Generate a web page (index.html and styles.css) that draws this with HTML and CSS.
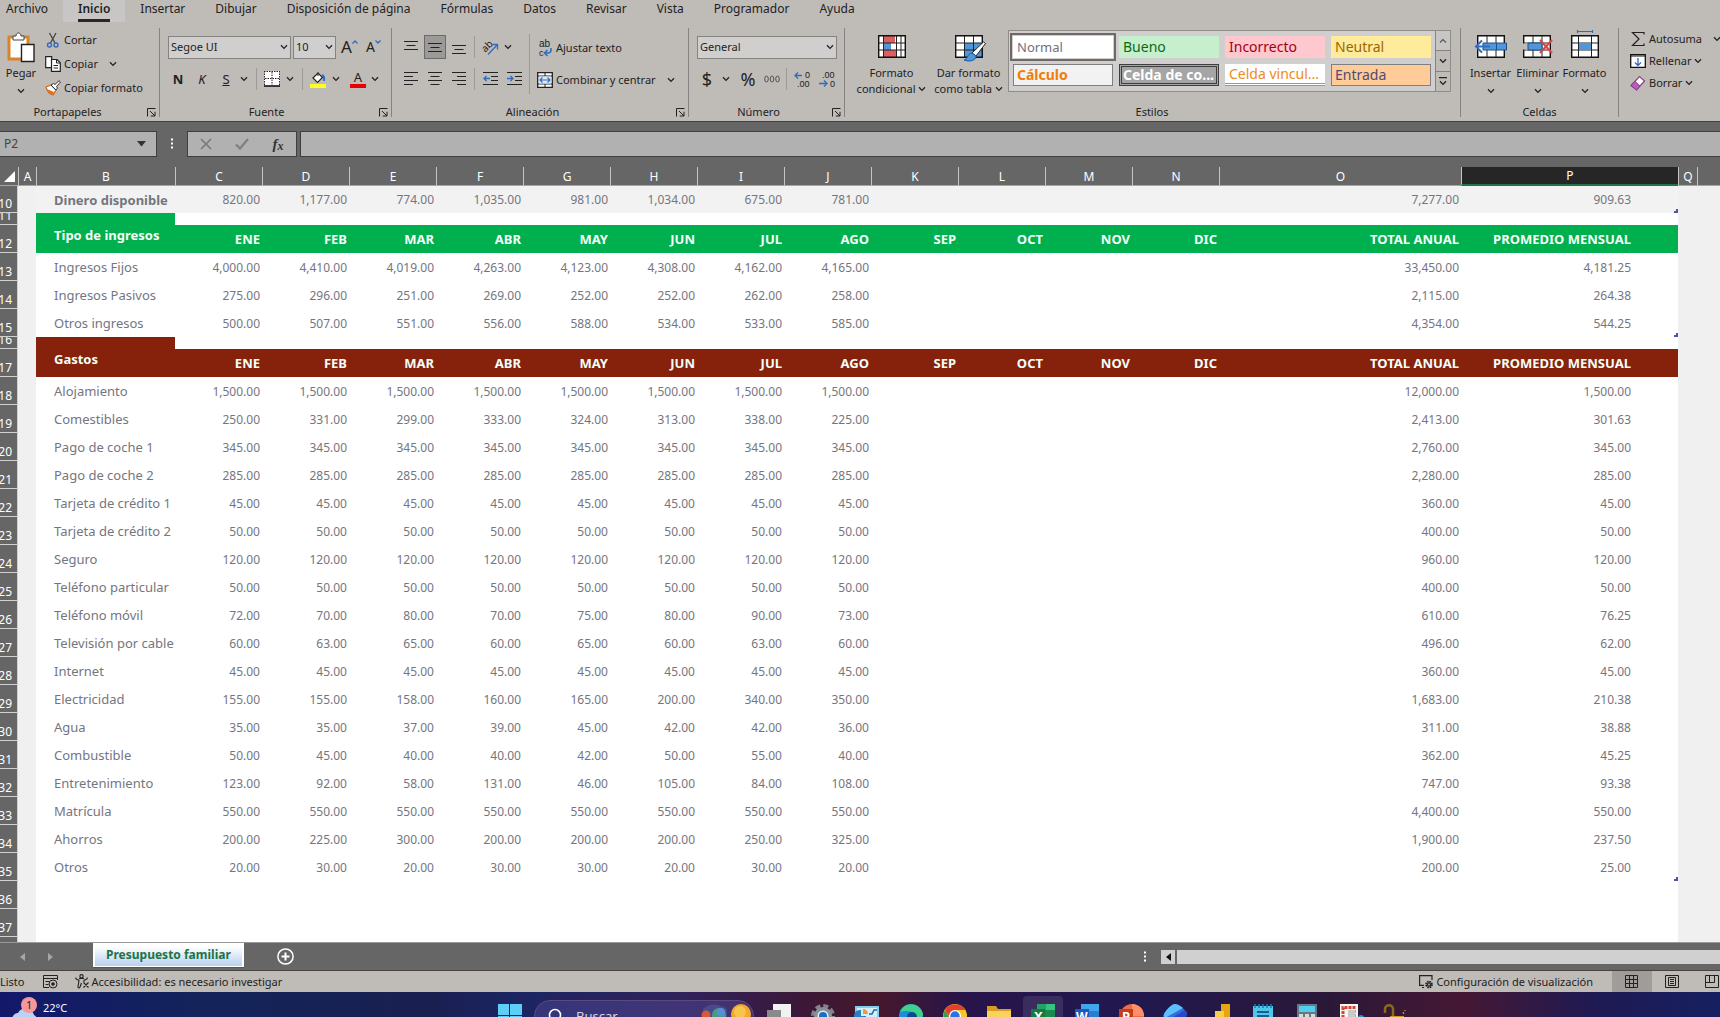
FILE: index.html
```html
<!DOCTYPE html>
<html lang="es">
<head>
<meta charset="utf-8">
<title>Presupuesto familiar</title>
<link rel="stylesheet" href="styles.css">
</head>
<body>
<svg class="symbols" aria-hidden="true">
  <symbol id="chevron" viewBox="0 0 8 6"><path d="M1 1.2 4 4.4 7 1.2" fill="none" stroke="#222" stroke-width="1.3"/></symbol>
  <symbol id="launcher" viewBox="0 0 9 9"><path d="M.5 8.5V.5H8.5M3 3l5 5M8 3.8V8H3.8" fill="none" stroke="#222"/></symbol>
</svg>

<nav class="tabs">
  <button>Archivo</button>
  <button class="active"><span>Inicio</span></button>
  <button>Insertar</button>
  <button>Dibujar</button>
  <button>Disposición de página</button>
  <button>Fórmulas</button>
  <button>Datos</button>
  <button>Revisar</button>
  <button>Vista</button>
  <button>Programador</button>
  <button>Ayuda</button>
</nav>

<div class="ribbon">
  <section class="group clipboard">
    <div class="body">
      <button class="big">
        <svg width="28" height="30" viewBox="0 0 28 30"><path d="M2 5h19v22H2z" fill="#fff" stroke="#d8842c" stroke-width="3"/><path d="M6 8V4h3c0-4 5-4 5 0h3v4z" fill="#fff" stroke="#444"/><path d="M14.500 12.500h12.500v17H14.500z" fill="#fff" stroke="#222" stroke-width="1.400"/></svg>
        <span>Pegar</span>
        <svg class="chev"><use href="#chevron"/></svg>
      </button>
      <div class="stack">
        <button class="tool"><svg width="16" height="16" viewBox="0 0 16 16"><path d="M4.500 1 10 11M11 1 5.500 11" stroke="#444" stroke-width="1.300"/><g fill="none" stroke="#2f6cc0" stroke-width="1.400"><circle cx="4.500" cy="13" r="2"/><circle cx="11" cy="13" r="2"/></g></svg>Cortar</button>
        <button class="tool"><svg width="16" height="16" viewBox="0 0 16 16"><path d="M.7.700h6v11h-6z" fill="#fff" stroke="#222" stroke-width="1.200"/><path d="M6.500 3.500H12l3.300 3.300v8.500H6.500z" fill="#fff" stroke="#222" stroke-width="1.200"/><path d="M11.500 3.500V7h3.500M8.500 9.500h4.500M8.500 12h4.500" fill="none" stroke="#222"/></svg>Copiar<svg class="chev wide"><use href="#chevron"/></svg></button>
        <button class="tool"><svg width="16" height="16" viewBox="0 0 16 16"><path d="M1 7l5-2 5 5-3 5C5 14 2 11 1 7z" fill="#fff" stroke="#c96a1c" stroke-width="1.200"/><path d="M2 9l7 3-1 3C5 14 3 12 2 9z" fill="#d8752a"/><path d="M6 5l5 5 1.500-2-1-1.500L15.500 2 14 .7 10 4.500 8.500 3.500z" fill="#fff" stroke="#333"/></svg>Copiar formato</button>
      </div>
    </div>
    <div class="caption">Portapapeles<button class="launch" aria-label="Portapapeles"><svg width="9" height="9"><use href="#launcher"/></svg></button></div>
  </section>

  <section class="group font">
    <div class="body rows">
      <div class="line">
        <select class="combo family" aria-label="Fuente"><option>Segoe UI</option></select>
        <select class="combo size" aria-label="Tamaño"><option>10</option></select>
        <button class="grow" aria-label="Aumentar">A<svg width="6" height="4" viewBox="0 0 6 4"><path d="M.5 3.500 3 1l2.500 2.500" fill="none" stroke="#2f6cc0" stroke-width="1.300"/></svg></button>
        <button class="grow shrink" aria-label="Disminuir">A<svg width="6" height="4" viewBox="0 0 6 4"><path d="M.5.500 3 3 5.500.500" fill="none" stroke="#2f6cc0" stroke-width="1.300"/></svg></button>
      </div>
      <div class="line">
        <button class="cell bold">N</button>
        <button class="cell italic">K</button>
        <button class="cell under">S</button>
        <button class="drop" aria-label="Subrayado"><svg class="chev"><use href="#chevron"/></svg></button>
        <i class="sep"></i>
        <button class="cell" aria-label="Bordes"><svg width="16" height="16" viewBox="0 0 16 16"><path d="M0 0h16v15H0z" fill="#fff"/><path d="M.5 0v14M15.500 0v14M0 .5h16M8 1v13M1 7.500h14" stroke="#222" stroke-dasharray="1.500 1"/><path d="M0 15h16" stroke="#111" stroke-width="1.600"/></svg></button>
        <button class="drop" aria-label="Tipo de borde"><svg class="chev"><use href="#chevron"/></svg></button>
        <i class="sep"></i>
        <button class="cell" aria-label="Color de relleno"><svg width="16" height="17" viewBox="0 0 16 17"><path d="M3 7l5-5 4.500 4.500-5 5z" fill="#fff" stroke="#222" stroke-width="1.200"/><path d="M8 5V1.500" stroke="#222"/><path d="M12 4c2 1 2.500 3 2 6" fill="none" stroke="#2f6cc0" stroke-width="2"/><path d="M0 13h16v4H0z" fill="#ff2"/></svg></button>
        <button class="drop" aria-label="Elegir relleno"><svg class="chev"><use href="#chevron"/></svg></button>
        <button class="cell letter" aria-label="Color de fuente">A</button>
        <button class="drop" aria-label="Elegir color"><svg class="chev"><use href="#chevron"/></svg></button>
      </div>
    </div>
    <div class="caption">Fuente<button class="launch" aria-label="Fuente"><svg width="9" height="9"><use href="#launcher"/></svg></button></div>
  </section>

  <section class="group align">
    <div class="body">
      <div class="rows">
        <div class="line">
          <button class="cell" aria-label="Superior"><svg width="14" height="14" viewBox="0 0 14 14"><path d="M0 1.500h14M2.500 5.500h9M0 9.500h14" stroke="#222"/></svg></button>
          <button class="cell pressed" aria-label="Medio"><svg width="14" height="14" viewBox="0 0 14 14"><path d="M0 3.500h14M2.500 7.500h9M0 11.500h14" stroke="#222"/></svg></button>
          <button class="cell" aria-label="Inferior"><svg width="14" height="14" viewBox="0 0 14 14"><path d="M0 5.500h14M2.500 9.500h9M0 13.500h14" stroke="#222"/></svg></button>
          <i class="sep"></i>
          <button class="cell" aria-label="Orientación"><svg width="17" height="17" viewBox="0 0 17 17"><text x="0" y="10" font-size="10" fill="#222" transform="rotate(-45 6 8)">ab</text><path d="M6 15.500 15 6M10.500 5.500H15.500V10.500" fill="none" stroke="#2f6cc0" stroke-width="1.300"/></svg></button>
          <button class="drop" aria-label="Ángulo"><svg class="chev"><use href="#chevron"/></svg></button>
        </div>
        <div class="line">
          <button class="cell" aria-label="Izquierda"><svg width="14" height="14" viewBox="0 0 14 14"><path d="M0 .5h14M0 4.500h9M0 8.500h14M0 12.500h9" stroke="#222"/></svg></button>
          <button class="cell" aria-label="Centrar"><svg width="14" height="14" viewBox="0 0 14 14"><path d="M0 .5h14M2.500 4.500h9M0 8.500h14M2.500 12.500h9" stroke="#222"/></svg></button>
          <button class="cell" aria-label="Derecha"><svg width="14" height="14" viewBox="0 0 14 14"><path d="M0 .5h14M5 4.500h9M0 8.500h14M5 12.500h9" stroke="#222"/></svg></button>
          <i class="sep"></i>
          <button class="cell" aria-label="Disminuir sangría"><svg width="15" height="14" viewBox="0 0 15 14"><path d="M0 .5h15M8 4.500h7M8 8.500h7M0 12.500h15" stroke="#222"/><path d="M1 6.500h6M3.500 4 1 6.500 3.500 9" fill="none" stroke="#2f6cc0" stroke-width="1.300"/></svg></button>
          <button class="cell" aria-label="Aumentar sangría"><svg width="15" height="14" viewBox="0 0 15 14"><path d="M0 .5h15M8 4.500h7M8 8.500h7M0 12.500h15" stroke="#222"/><path d="M0 6.500h6M3.500 4 6 6.500 3.500 9" fill="none" stroke="#2f6cc0" stroke-width="1.300"/></svg></button>
        </div>
      </div>
      <i class="sep tall"></i>
      <div class="rows wrapcol">
        <button class="tool"><svg class="glyphs" width="16" height="17" viewBox="0 0 16 17"><text x="2" y="7" font-size="10">ab</text><text x="2" y="16" font-size="9">c</text><path d="M14 8v2c0 2-1 3-3 3H8M10.500 10 7.500 13l3 3" fill="none" stroke="#2f6cc0" stroke-width="1.500"/></svg>Ajustar texto</button>
        <button class="tool"><svg width="16" height="16" viewBox="0 0 16 16"><path d="M.7.700h14.600v14.600H.7z" fill="#fff" stroke="#222" stroke-width="1.300"/><path d="M1 4h14M1 12h14M8 1v3M8 12v3" stroke="#222"/><path d="M2 4.500h12v7H2z" fill="#dbe9f8"/><path d="M3 8h10M5.500 5.500 3 8l2.500 2.500M10.500 5.500 13 8l-2.500 2.500" fill="none" stroke="#2f6cc0" stroke-width="1.200"/></svg>Combinar y centrar<svg class="chev wide"><use href="#chevron"/></svg></button>
      </div>
    </div>
    <div class="caption">Alineación<button class="launch" aria-label="Alineación"><svg width="9" height="9"><use href="#launcher"/></svg></button></div>
  </section>

  <section class="group number">
    <div class="body rows">
      <div class="line"><select class="combo format" aria-label="Formato de número"><option>General</option></select></div>
      <div class="line">
        <button class="cell sign">$</button>
        <button class="drop" aria-label="Moneda"><svg class="chev"><use href="#chevron"/></svg></button>
        <button class="cell sign">%</button>
        <button class="cell thousand" aria-label="Millares"><svg width="16" height="8" viewBox="0 0 16 8"><g fill="none" stroke="#555"><ellipse cx="2.500" cy="4" rx="1.800" ry="3"/><ellipse cx="8" cy="4" rx="1.800" ry="3"/><ellipse cx="13.500" cy="4" rx="1.800" ry="3"/></g></svg></button>
        <i class="sep"></i>
        <button class="cell" aria-label="Aumentar decimales"><svg class="glyphs" width="17" height="17" viewBox="0 0 17 17"><text x="11" y="7" font-size="9">0</text><text x="3" y="16" font-size="9">.00</text><path d="M1 4.500h7M4 1.500l-3 3 3 3" fill="none" stroke="#2f6cc0" stroke-width="1.300"/></svg></button>
        <button class="cell" aria-label="Disminuir decimales"><svg class="glyphs" width="17" height="17" viewBox="0 0 17 17"><text x="3" y="7" font-size="9">.00</text><text x="11" y="16" font-size="9">0</text><path d="M0 12.500h7.500M5 9.500l3 3-3 3" fill="none" stroke="#2f6cc0" stroke-width="1.300"/></svg></button>
      </div>
    </div>
    <div class="caption">Número<button class="launch" aria-label="Número"><svg width="9" height="9"><use href="#launcher"/></svg></button></div>
  </section>

  <section class="group styles">
    <div class="body">
      <button class="big two">
        <svg width="28" height="23" viewBox="0 0 28 23"><path d="M.7.700h26.600v21.600H.7z" fill="#fff"/><path d="M5 1h12v7H5zM5 15h14v7H5z" fill="#dc5f63"/><path d="M5 8h8v7H5z" fill="#4f97d8"/><path d="M5.500 1v21M18.500 1v21M23 1v21M1 8h26M1 15h26" stroke="#222" stroke-width="1"/><path d="M.7.700h26.600v21.600H.7z" fill="none" stroke="#111" stroke-width="1.400"/></svg>
        <span>Formato<br>condicional <svg class="chev"><use href="#chevron"/></svg></span>
      </button>
      <button class="big two">
        <svg width="32" height="27" viewBox="0 0 32 27" class="drop-low"><path d="M.7.700h26.600v21.600H.7z" fill="#fff"/><path d="M9 8h18v14H9z" fill="#4f97d8"/><path d="M9.500 1v21M18.500 1v21M1 8h26M1 15h26" stroke="#222"/><path d="M.7.700h26.600v21.600H.7z" fill="none" stroke="#111" stroke-width="1.400"/><path d="M17 18 28.500 7l2 1.500L21 21z" fill="#fff" stroke="#222"/><path d="M17 18l4 3c0 5-7 6-12 4 4-1 3-6 8-7z" fill="#4f97d8" stroke="#1e5aa0"/></svg>
        <span>Dar formato<br>como tabla <svg class="chev"><use href="#chevron"/></svg></span>
      </button>
      <div class="gallery">
        <div class="swatches">
          <button class="sw normal">Normal</button>
          <button class="sw good">Bueno</button>
          <button class="sw bad">Incorrecto</button>
          <button class="sw neutral">Neutral</button>
          <button class="sw calc">Cálculo</button>
          <button class="sw check">Celda de co...</button>
          <button class="sw linked">Celda vincul...</button>
          <button class="sw input">Entrada</button>
        </div>
        <div class="scroller">
          <button aria-label="Subir"><svg width="8" height="6" viewBox="0 0 8 6"><path d="M1 4.500 4 1.500l3 3" fill="none" stroke="#555" stroke-width="1.200"/></svg></button>
          <button aria-label="Bajar"><svg class="chev"><use href="#chevron"/></svg></button>
          <button aria-label="Más"><svg width="8" height="9" viewBox="0 0 8 9"><path d="M0 .7h8M1 4.200 4 7.400l3-3.200" fill="none" stroke="#222" stroke-width="1.300"/></svg></button>
        </div>
      </div>
    </div>
    <div class="caption">Estilos</div>
  </section>

  <section class="group cells">
    <div class="body">
      <button class="big three">
        <svg width="32" height="23" viewBox="0 0 32 23"><path d="M2.700.700h26.600v21.600H2.700z" fill="#fff" stroke="#111" stroke-width="1.400"/><path d="M12 1v21M21 1v21" stroke="#222"/><path d="M8 8h23.500v7H8z" fill="#4f97d8" stroke="#1e4f8a"/><path d="M1 11.500h14M7 5.500l-6 6 6 6" fill="none" stroke="#2f6cc0" stroke-width="2"/><path d="M21.500 8v7" stroke="#1e4f8a"/></svg>
        <span>Insertar</span><svg class="chev"><use href="#chevron"/></svg>
      </button>
      <button class="big three">
        <svg width="30" height="23" viewBox="0 0 30 23"><path d="M.7.700h26.600v21.600H.7z" fill="#fff" stroke="#111" stroke-width="1.400"/><path d="M10 1v21M19 1v21M1 8h26M1 15h26" stroke="#222"/><path d="M0 8.500h5v6H0z" fill="#bfbbb7"/><path d="M5 8h14v7H5z" fill="#4f97d8" stroke="#1e4f8a"/><path d="M17 5l12 13M29 5 17 18" stroke="#d5474b" stroke-width="2.200"/></svg>
        <span>Eliminar</span><svg class="chev"><use href="#chevron"/></svg>
      </button>
      <button class="big three">
        <svg width="28" height="29" viewBox="0 0 28 29" class="raise"><path d="M6.500 1v3M21.500 1v3M6.500 2.500h15" stroke="#2f6cc0" stroke-width="1.200"/><path d="M.7 6.700h26.600v21.600H.7z" fill="#fff" stroke="#111" stroke-width="1.400"/><path d="M7.500 7v21M20.500 7v21M1 14h26M1 21h26" stroke="#222"/><path d="M8 14h12v7H8z" fill="#4f97d8"/></svg>
        <span>Formato</span><svg class="chev"><use href="#chevron"/></svg>
      </button>
    </div>
    <div class="caption">Celdas</div>
  </section>

  <section class="group editing">
    <div class="stack">
      <button class="tool"><svg width="16" height="16" viewBox="0 0 16 16"><path d="M14 3.500V1.500H2.500L9 8l-6.500 6.500H14v-2" fill="none" stroke="#222" stroke-width="1.200"/></svg>Autosuma<svg class="chev wide"><use href="#chevron"/></svg></button>
      <button class="tool"><svg width="16" height="16" viewBox="0 0 16 16"><path d="M.7 1.700h14.600v12.600H.7z" fill="#fff" stroke="#111" stroke-width="1.300"/><path d="M1 3h14" stroke="#111"/><path d="M8 5v7M5 9.500l3 3 3-3" fill="none" stroke="#2f6cc0" stroke-width="1.300"/></svg>Rellenar<svg class="chev"><use href="#chevron"/></svg></button>
      <button class="tool"><svg width="16" height="16" viewBox="0 0 16 16"><path d="M1 10.500 9.500 1.500l5 4.500-8 9z" fill="#fff" stroke="#92398f" stroke-width="1.200"/><path d="M1 10.500 5 6.300l5 4.700-3.500 4z" fill="#b85fb5" stroke="#92398f"/></svg>Borrar<svg class="chev"><use href="#chevron"/></svg></button>
    </div>
  </section>
</div>

<div class="formula-bar">
  <div class="namebox"><input aria-label="Cuadro de nombres" value="P2"><svg width="9" height="6" viewBox="0 0 9 6"><path d="M0 0h9L4.500 5.500z" fill="#333"/></svg></div>
  <svg class="dots" width="3" height="12" viewBox="0 0 3 12"><path d="M0 1.500h2M0 5.500h2M0 9.500h2" stroke="#fff" stroke-width="2"/></svg>
  <div class="fx">
    <button aria-label="Cancelar"><svg width="12" height="12" viewBox="0 0 12 12"><path d="M1 1l10 10M11 1 1 11" stroke="#777" stroke-width="1.500"/></svg></button>
    <button aria-label="Introducir"><svg width="14" height="12" viewBox="0 0 14 12"><path d="M1 6.500 5 10.500 13 1" fill="none" stroke="#808080" stroke-width="2.200"/></svg></button>
    <button class="fn">f<small>x</small></button>
  </div>
  <input class="formula" aria-label="Barra de fórmulas">
</div>

<main class="grid">
  <table id="sheet"></table>
</main>

<div class="sheetbar">
  <div class="sheets">
    <button class="nav" aria-label="Anterior"><svg width="5" height="8" viewBox="0 0 5 8"><path d="M5 0v8L0 4z" fill="#a6a6a6"/></svg></button>
    <button class="nav" aria-label="Siguiente"><svg width="5" height="8" viewBox="0 0 5 8"><path d="M0 0v8l5-4z" fill="#a6a6a6"/></svg></button>
    <button class="sheet">Presupuesto familiar</button>
    <button class="add" aria-label="Hoja nueva"><svg width="17" height="17" viewBox="0 0 17 17"><circle cx="8.500" cy="8.500" r="7.600" fill="none" stroke="#fff" stroke-width="1.500"/><path d="M8.500 4.500v8M4.500 8.500h8" stroke="#fff" stroke-width="2"/></svg></button>
  </div>
  <div class="hscroll">
    <svg class="dots" width="3" height="12" viewBox="0 0 3 12"><path d="M0 1.500h2M0 5.500h2M0 9.500h2" stroke="#fff" stroke-width="2"/></svg>
    <button aria-label="Desplazar a la izquierda"><svg width="5" height="8" viewBox="0 0 5 8"><path d="M5 0v8L0 4z" fill="#111"/></svg></button>
    <div class="track"></div>
  </div>
</div>

<footer class="status">
  <span class="ready">Listo</span>
  <svg width="15" height="14" viewBox="0 0 15 14"><g fill="none" stroke="#222"><path d="M6 12.500H.5V.5h14V5M.5 3.500h14M2.500 6.500h4M2.500 9.500h3"/><circle cx="10" cy="9" r="4"/></g><circle cx="10" cy="9" r="1.800" fill="#222"/></svg>
  <button class="access"><svg width="15" height="15" viewBox="0 0 15 15"><g fill="none" stroke="#222" stroke-width="1.100"><circle cx="6.500" cy="2.300" r="1.700"/><path d="M1 3.500c-.8 1.200 0 1.700 3 2.700L3 13c0 1.200 1.500 1.200 2 0l1.500-4M12 3.500c.8 1.200 0 1.700-3 2.700v2M4 4.500h5M8.500 8.500l5 5M13.500 8.500l-5 5"/></g></svg>Accesibilidad: es necesario investigar</button>
  <button class="config"><svg width="15" height="14" viewBox="0 0 15 14"><g fill="none" stroke="#222" stroke-width="1.200"><path d="M13 5V.6H.6v9.800H5M3 12.500h2"/><circle cx="10" cy="9.500" r="2.800" stroke-width="2" stroke-dasharray="1.500 .7"/><circle cx="10" cy="9.500" r="1.500"/></g></svg>Configuración de visualización</button>
  <div class="views">
    <button class="on" aria-label="Normal"><svg width="14" height="14" viewBox="0 0 14 14"><path d="M.5.500h12v12H.5zM4.500.500v12M8.500.500v12M.5 4.500h12M.5 8.500h12" fill="none" stroke="#222"/></svg></button>
    <button aria-label="Diseño de página"><svg width="14" height="14" viewBox="0 0 14 14"><path d="M.5.500h13v12H.5zM3.500 2.500h7v8h-7zM5 4.500h4M5 6.500h4M5 8.500h4" fill="none" stroke="#222"/></svg></button>
    <button aria-label="Saltos de página"><svg width="14" height="14" viewBox="0 0 14 14"><path d="M.5.500h13v12H.5zM.5 7.500h9M4.500.500v7M9.500.500v7" fill="none" stroke="#222"/></svg></button>
  </div>
</footer>

<div class="taskbar">
  <button class="weather">
    <svg width="28" height="28" viewBox="0 0 28 28"><path d="M0 28c0-8 3-12 7-12 3-6 13-7 16 2 4 2 5 10 5 10z" fill="#b9d3f6"/><circle cx="18" cy="8" r="8" fill="#f7979b"/><text x="15" y="12" font-size="11" fill="#222">1</text></svg>
    <span>22°C</span>
  </button>
  <div class="apps">
    <button class="app" aria-label="Inicio"><svg width="24" height="24" viewBox="0 0 24 24"><path d="M0 0h11v11H0zM12 0h12v11H12zM0 12h11v12H0zM12 12h12v12H12z" fill="#5ecdf8"/></svg></button>
    <label class="search"><svg width="16" height="16" viewBox="0 0 16 16"><circle cx="7" cy="7" r="5.500" fill="none" stroke="#fff" stroke-width="1.600"/><path d="M11 11l4 4" stroke="#fff" stroke-width="1.600"/></svg><input placeholder="Buscar" aria-label="Buscar"><svg width="52" height="26" viewBox="0 0 52 26"><path d="M4 6c6-6 16-6 24 0v12H4z" fill="#4a4a86"/><circle cx="7" cy="12" r="4.500" fill="#d9583c"/><circle cx="20" cy="12" r="7" fill="#4a9a8a"/><circle cx="22" cy="9" r="4" fill="#5a8ed8"/><circle cx="42" cy="11" r="10" fill="#f2a72e"/><circle cx="41" cy="9" r="6" fill="#f9c44c"/></svg></label>
    <button class="app" aria-label="Vista de tareas"><svg width="24" height="24" viewBox="0 0 24 24"><path d="M6 0h18v18H6z" fill="#f2f2f2"/><path d="M0 6h14v14H0z" fill="#8a8a8a"/></svg></button>
    <button class="app" aria-label="Configuración"><svg width="24" height="24" viewBox="0 0 24 24"><circle cx="12" cy="12" r="10" fill="none" stroke="#7d848c" stroke-width="4" stroke-dasharray="5 2.850"/><circle cx="12" cy="12" r="9" fill="#8a9098"/><circle cx="12" cy="12" r="5.500" fill="#e8eef4"/><circle cx="12" cy="12" r="4" fill="#1a6fc0"/></svg></button>
    <button class="app" aria-label="Panel"><svg width="24" height="24" viewBox="0 0 24 24"><path d="M0 2h24v18H0z" fill="#7fd0ee"/><path d="M2 4h20v14H2z" fill="#d5eefa"/><path d="M6 12V6a6 6 0 1 0 5 6z" fill="#2a7fc4"/><path d="M8 5v5h5a5 5 0 0 0-5-5z" fill="#f0973a"/><path d="M14 10h3l2-4h3M14 14h8" fill="none" stroke="#1c6aa8" stroke-width="1.500"/></svg></button>
    <button class="app" aria-label="Edge"><svg width="24" height="24" viewBox="0 0 24 24"><circle cx="12" cy="12" r="12" fill="#1d8fd8"/><path d="M1 8C5-2 20-3 24 10c0 3-2 5-6 5-2-8-10-9-17-7z" fill="#3fcf8e"/><circle cx="13" cy="13" r="5" fill="#0c4a90"/></svg></button>
    <button class="app" aria-label="Chrome"><svg width="24" height="24" viewBox="0 0 24 24"><circle cx="12" cy="12" r="12" fill="#f7c52c"/><path d="M2 6a12 12 0 0 0 10 18l-5-9z" fill="#2fa050"/><path d="M2 6a12 12 0 0 1 20.500 0H12l-5 8z" fill="#e43e2f"/><circle cx="12" cy="12" r="6" fill="#fff"/><circle cx="12" cy="12" r="4.700" fill="#2c73e0"/></svg></button>
    <button class="app" aria-label="Explorador"><svg width="24" height="24" viewBox="0 0 24 24"><path d="M0 2h9l2 3h13v6H0z" fill="#d99c1f"/><path d="M0 7h24v15H0z" fill="#fbd35c"/></svg></button>
    <button class="app open" aria-label="Excel"><svg width="24" height="24" viewBox="0 0 24 24"><path d="M6 0h9v24H6z" fill="#21a366"/><path d="M15 0h9v12h-9z" fill="#33c481"/><path d="M6 6h18v8H6z" fill="#1a8a50"/><path d="M0 5h14v14H0z" fill="#107c41"/><text x="3" y="17" font-size="13" font-weight="700" fill="#fff">X</text></svg></button>
    <button class="app" aria-label="Word"><svg width="24" height="24" viewBox="0 0 24 24"><path d="M6 0h18v8H6z" fill="#41a5ee"/><path d="M6 7h18v12H6z" fill="#2b7cd3"/><path d="M0 5h14v14H0z" fill="#185abd"/><text x="1" y="17" font-size="12" font-weight="700" fill="#fff">W</text></svg></button>
    <button class="app" aria-label="PowerPoint"><svg width="24" height="24" viewBox="0 0 24 24"><circle cx="13" cy="12" r="12" fill="#ed6c47"/><path d="M13 0a12 12 0 0 1 12 12H13z" fill="#ff8f6b"/><path d="M0 5h14v14H0z" fill="#c43e1c"/><text x="3" y="17" font-size="13" font-weight="700" fill="#fff">P</text></svg></button>
    <button class="app" aria-label="Microsoft 365"><svg width="24" height="24" viewBox="0 0 24 24"><path d="M12 0c3 0 10 5 12 9l-3 9H3L0 12C2 7 9 0 12 0z" fill="#2f6fe0"/><path d="M12 0c3 0 7 3 8 4L2 14c-2-2-1-5 1-7 2-3 6-7 9-7z" fill="#5cc1fa"/><path d="M22 6c3 3 2 8-2 11H4z" fill="#2a48c8"/></svg></button>
    <button class="app" aria-label="Power BI"><svg width="24" height="24" viewBox="0 0 24 24"><path d="M14 0h9v24h-9z" fill="#e6a512"/><path d="M8 7h9v17H8z" fill="#f7cf4a"/><path d="M3 13h8v11H3z" fill="#fbe07a"/></svg></button>
    <button class="app" aria-label="Bloc de notas"><svg width="20" height="24" viewBox="0 0 20 24"><path d="M0 2h20v22H0z" fill="#4fc6ea"/><path d="M2 0v4M6 0v4M10 0v4M14 0v4M18 0v4" stroke="#1a7fae" stroke-width="1.500"/><path d="M4 8h12M4 12h12" stroke="#15608c" stroke-width="2"/></svg></button>
    <button class="app" aria-label="Calculadora"><svg width="20" height="24" viewBox="0 0 20 24"><path d="M0 0h20v24H0z" fill="#6c7680"/><path d="M2 2h16v6H2z" fill="#4fd0f0"/><path d="M2 10h4v4H2zM8 10h4v4H8zM14 10h4v4h-4z" fill="#d5dade"/></svg></button>
    <button class="app" aria-label="Recortes"><svg width="24" height="24" viewBox="0 0 24 24"><path d="M1 0h18v24H1z" fill="#f5f5f5"/><path d="M4 14V3.500h11V14" fill="none" stroke="#d5452e" stroke-width="3" stroke-dasharray="3 1"/><path d="M9 6h7v12H9z" fill="#c9c9c9"/><circle cx="22" cy="14" r="3" fill="#2c8fd0"/></svg></button>
    <button class="app" aria-label="Candado"><svg width="24" height="24" viewBox="0 0 24 24"><path d="M2 9V5c0-5 8-5 8 0v8" fill="none" stroke="#8a6a1c" stroke-width="2.500"/><path d="M7 12h14v10H7z" fill="#c79a2a"/><path d="M20 8l1 2M22 6v1" stroke="#d8c070"/></svg></button>
  </div>
</div>
<script src="sheet.js"></script>
</body>
</html>
```
FILE: styles.css
```css
* { box-sizing: border-box; }
body {
  margin: 0;
  height: 100vh;
  display: flex;
  flex-direction: column;
  overflow: hidden;
  background: #666;
  color: #222;
  font: 11px/16px "Noto Sans", "Open Sans", sans-serif;
}
button, input, select { font: inherit; color: inherit; border: 0; background: none; padding: 0; margin: 0; border-radius: 0; }
button { white-space: nowrap; }
svg { display: block; flex: none; overflow: visible; }
.symbols { position: absolute; width: 0; height: 0; }
.chev { width: 8px; height: 6px; }
.glyphs text { font-family: "Liberation Sans", sans-serif; fill: #222; }

/* Ribbon tabs */
.tabs { display: flex; height: 24px; background: #bfbbb7; padding-right: 8px; }
.tabs button { padding: 0 15px; font-size: 12px; line-height: 18px; height: 22px; display: flex; align-items: flex-start; }
.tabs button:first-child { padding-left: 6px; }
.tabs .active { background: #c8c6c4; font-weight: 600; }
.tabs .active span { display: block; border-bottom: 3px solid #262626; height: 22px; }

/* Ribbon */
.ribbon { display: flex; height: 98px; background: #bfbbb7; border-bottom: 1px solid #444; padding: 4px 0; overflow: hidden; }
.group { display: flex; flex-direction: column; flex: none; border-right: 1px solid #85827f; }
.group .body { display: flex; flex: none; height: 76px; }
.caption { position: relative; text-align: center; line-height: 16px; }
.launch { position: absolute; right: 3px; top: 4px; }
.clipboard { width: 160px; }
.clipboard .caption { padding-right: 24px; }
.font { width: 232px; padding-left: 8px; }
.font .caption { padding-right: 26px; }
.align { width: 297px; padding-left: 7px; }
.align .caption { padding-right: 22px; }
.number { width: 156px; padding-left: 8px; }
.number .caption { padding-right: 24px; }
.styles { width: 616px; padding-left: 8px; }
.styles .caption { padding-right: 9px; }
.cells { width: 158px; padding-left: 6px; }
.cells .caption { padding-right: 6px; }
.editing { border: 0; padding-left: 11px; }

.big { display: flex; flex-direction: column; align-items: center; gap: 3px; width: 42px; padding-top: 4px; }
.big > .chev { margin-top: 4px; }
.big.two { width: 77px; padding-top: 7px; gap: 7px; }
.big.two .chev { display: inline-block; vertical-align: 1px; }
.big.three { width: 47px; padding-top: 7px; gap: 7px; }
.big.three > .chev { margin-top: 0; }
.big .drop-low { margin: 0 0 -4px 4px; }
.big .raise { margin-top: -6px; }
.stack { display: flex; flex-direction: column; }
.tool { display: flex; align-items: center; gap: 3px; height: 24px; }
.tool .wide { margin-left: 8px; }
.clipboard .tool { padding-left: 3px; }
.editing .tool { height: 22px; }

.rows { flex-direction: column; }
.line { display: flex; align-items: center; height: 24px; }
.rows .line:first-child { margin-top: 7px; }
.rows .line + .line { margin-top: 8px; }
.cell { width: 24px; height: 24px; display: flex; align-items: center; justify-content: center; }
.drop { width: 12px; height: 24px; display: flex; align-items: center; justify-content: center; }
.sep { width: 1px; height: 22px; background: #9d9a97; margin: 0 7px; }
.sep.tall { height: 60px; margin: 6px 7px 0 0; }
.bold { font-weight: 700; font-size: 13px; }
.italic { font-style: italic; font-size: 13px; }
.under { text-decoration: underline; font-size: 13px; }
.font .line:nth-child(2) { margin-left: -2px; }
.font .sep { margin: 0 3px 0 6px; }
.letter { font-size: 13px; line-height: 12px; }
.font .letter { flex: none; width: 16px; height: 17px; margin-left: 8px; border-bottom: 4px solid #e80000; }
.font .letter + .drop { width: 18px; }
.pressed { background: #9c9a98; border: 1px solid #6a6a6a; width: 22px; margin: 0 1px; }
.grow { display: flex; font-size: 17px; margin-left: 5px; line-height: 20px; }
.grow svg { margin-top: 3px; }
.shrink { font-size: 14px; margin-left: 8px; }
.combo {
  appearance: none; height: 23px; border: 1px solid #858381; padding: 0 2px;
  background: #d0cfcd url("data:image/svg+xml,%3Csvg xmlns='http://www.w3.org/2000/svg' width='8' height='6'%3E%3Cpath d='M1 1.200 4 4.400 7 1.200' fill='none' stroke='%23222' stroke-width='1.300'/%3E%3C/svg%3E") no-repeat right 2px center;
}
.combo.family { width: 123px; }
.combo.size { width: 43px; margin-left: 2px; }
.combo.format { width: 140px; }
.align .body > .rows:first-child { width: 130px; }
.align .line .sep { margin: 0 3px; }
.wrapcol { display: flex; }
.wrapcol .tool { height: 24px; margin-top: 8px; }
.sign { font-size: 18px; }
.number .cell.sign:first-child { width: 20px; }
.number .drop { width: 18px; }
.number .sep { margin: 0 3px; }
.number .drop + .sign { width: 26px; }
.number .thousand { width: 22px; }
.number .sep + .cell { margin-right: 1px; }

.gallery { display: flex; height: 62px; margin: 2px 0 0 1px; border: 1px solid #8f8c8a; background: #d0cfce; }
.swatches { display: grid; grid-template-columns: repeat(4, 100px); gap: 6px; padding: 5px 4px; align-content: start; }
.sw { height: 22px; padding: 0 4px; text-align: left; font-size: 14px; line-height: 18px; overflow: hidden; }
.sw.normal { background: #fff; color: #6f7280; font-size: 13px; outline: 2px solid #6e6866; outline-offset: 1px; }
.sw.good { background: #c6efce; color: #0b6b12; }
.sw.bad { background: #ffc7ce; color: #a00014; }
.sw.neutral { background: #ffeb9c; color: #9c6500; }
.sw.calc { background: #f2f2f2; color: #f07d0a; font-weight: 700; border: 1px solid #7f7f7f; padding: 0 3px; }
.sw.check { background: #a5a5a5; color: #fff; font-weight: 700; border: 3px double #3f3f3f; padding: 0 1px; line-height: 14px; }
.sw.linked { background: #fff; color: #f08a20; border-bottom: 3px double #e08a20; line-height: 16px; }
.sw.input { background: #ffcc99; color: #4f4a76; border: 1px solid #7f7f7f; padding: 0 3px; }
.scroller { display: flex; flex-direction: column; width: 15px; }
.scroller button { flex: 1; display: flex; align-items: center; justify-content: center; background: #bfbbb7; border: 1px solid #858381; border-width: 0 0 1px 1px; }
.scroller button:first-child { background: #c8c6c4; }
.scroller button:last-child { border-bottom: 0; }

/* Formula bar */
.formula-bar { display: flex; align-items: flex-start; padding-top: 9px; height: 45px; }
.namebox { display: flex; align-items: center; width: 157px; height: 26px; background: #b1b1b1; border: 1px solid #3f3f3f; border-left: 0; padding: 0 10px 0 4px; color: #444; }
.namebox input { flex: 1; min-width: 0; font-size: 12px; }
.formula-bar .dots { margin: 7px 13px 0 14px; }
.fx { display: flex; width: 110px; height: 26px; background: #b1b1b1; border: 1px solid #3f3f3f; }
.fx button { flex: 1; display: flex; align-items: center; justify-content: center; }
.fx .fn { font: italic 700 15px/16px "Liberation Serif", serif; color: #333; }
.fn small { font-size: 12px; padding-top: 3px; }
.formula { flex: 1; height: 26px; margin-left: 3px; background: #b1b1b1; border: 1px solid #3f3f3f; border-right: 0; }

/* Grid: scrolled a few pixels so the row numbers run off the left edge */
.grid { flex: 1; min-height: 0; overflow: hidden; background: #f0f0f0; }
table { table-layout: fixed; width: calc(100% + 6px); margin-left: -6px; border-collapse: separate; border-spacing: 0; }
th, td { padding: 0; }
thead th { height: 19px; background: #666; color: #fff; font-size: 12px; font-weight: 400; line-height: 16px; padding-top: 1px; border-left: 1px solid #c4c4c4; border-bottom: 1px solid #a6a6a6; }
thead th.selected { background: #262626; border-bottom: 2px solid #217346; }
.corner svg { margin-left: auto; margin-right: 3px; }
.rownum { background: #666; color: #fff; font-weight: 400; border-right: 1px solid #d0d0d0; border-bottom: 1px solid #d0d0d0; }
.rownum div { display: flex; align-items: flex-end; justify-content: flex-end; overflow: hidden; padding-right: 5px; font-size: 12px; line-height: 16px; height: 27px; }
tr.first .rownum div { height: 26px; }
tr.thin .rownum div { height: 11px; }
tbody td { background: #fff; color: #74767f; font-size: 12px; text-align: right; padding: 1px 2px 0 0; position: relative; }
tr.thin td, tr.head td { padding-top: 0; }
tbody .side { background: #f0f0f0; }
tbody .name { text-align: left; padding-left: 18px; font-size: 13px; white-space: nowrap; font-weight: 400; color: #74767f; background: #fff; }
tbody .avg { padding-right: 47px; }
tr.head .avg { padding-right: 47px; }
tr.first td, tr.first .name { background: #f2f2f2; }
tr.first .name, tr.head td, tbody .title { font-weight: 700; }
tr.head td { color: #f4fff8; font-size: 13px; }
tbody .title { color: #f4fff8; padding-top: 4px; }
.income td:not(.side), tbody .title.income { background: #00b04f; }
.expense td:not(.side), tbody .title.expense { background: #86220b; }
tr.first td.side { background: #f0f0f0; }
.end .avg::after { content: ""; position: absolute; right: 0; bottom: 0; width: 4px; height: 4px; background: #4b55a0; clip-path: polygon(50% 0, 100% 0, 100% 100%, 0 100%, 0 50%, 50% 50%); }

/* Sheet tabs and horizontal scroll bar */
.sheetbar { display: flex; height: 28px; border-top: 1px solid #999; }
.sheets { flex: 1; display: flex; align-items: flex-start; }
.nav { width: 28px; height: 27px; display: flex; align-items: center; justify-content: center; }
.nav:first-child { margin-left: 8px; }
.sheet { height: 24px; margin-left: 29px; padding: 0 11px; font-size: 12px; font-weight: 700; line-height: 22px; color: #217346; background: linear-gradient(#fff 15%, #b8d0ee); border: 2px solid #fff; border-width: 0 2px 1px; box-shadow: 0 1px #217346; }
.add { margin: 5px 0 0 33px; }
.hscroll { flex: 0 0 34%; display: flex; align-items: center; padding-left: 9px; }
.hscroll button { display: flex; align-items: center; justify-content: center; width: 14px; height: 14px; margin: 0 2px 0 14px; background: #d0d0d0; }
.hscroll .track { flex: 1; height: 14px; background: #d0d0d0; }

/* Status bar */
.status { display: flex; align-items: center; height: 22px; background: #bfbbb7; border-top: 1px solid #444; overflow: hidden; }
.ready { margin-right: 18px; }
.status .access, .status .config { display: flex; align-items: center; gap: 2px; }
.access { margin-left: 17px; }
.config { margin-left: auto; }
.views { display: flex; align-self: stretch; margin: 0 -12px 0 19px; }
.views button { width: 40px; display: flex; align-items: center; justify-content: center; }
.views .on { background: #9f9c99; }

/* Taskbar, cut by the bottom of the window */
.taskbar { flex: none; display: flex; height: 25px; overflow: hidden; color: #fff; background: linear-gradient(90deg, #14186a, #13245a 12%, #1a1f50 25%, #1b2562 30%, #30225a 40%, #3c1736 47%, #46182c 51%, #27144a 56%, #21184f 66%, #2a1838 77%, #451834 85%, #1e1a54 93%, #162060); }
.weather { display: flex; align-items: flex-start; gap: 4px; width: 488px; padding: 5px 0 0 11px; }
.weather span { line-height: 22px; }
.apps { display: flex; height: 48px; align-items: flex-start; }
.app { width: 40px; height: 40px; margin: 4px 2px; padding-top: 8px; display: flex; justify-content: center; border-radius: 4px 4px 0 0; }
.app.open { background: rgba(255, 255, 255, .1); }
.apps .app:first-child { margin: 4px 4px 4px 2px; }
.search { display: flex; align-items: center; gap: 12px; width: 220px; height: 32px; margin: 8px 3px 0 0; padding: 0 2px 0 13px; border: 1px solid #5a4a80; border-radius: 16px; background: rgba(90, 80, 160, .4); }
.search input { flex: 1; min-width: 0; font-size: 13px; }
.search input::placeholder { color: #d8d4e8; opacity: 1; }
```
FILE: sheet.js
```javascript
const months = ["ENE", "FEB", "MAR", "ABR", "MAY", "JUN", "JUL", "AGO", "SEP", "OCT", "NOV", "DIC"];
const columns = [["", 24], ["A", 18], ["B", 139],
  ...[..."CDEFGHIJKLMN"].map(c => [c, 87]),
  ["O", 242], ["P", 217], ["Q", 19], ["", null]];

const rows = [
  [10, "Dinero disponible", "820.00 1,177.00 774.00 1,035.00 981.00 1,034.00 675.00 781.00", "7,277.00", "909.63", "first end"],
  ["head", 11, "Tipo de ingresos", "income"],
  [13, "Ingresos Fijos", "4,000.00 4,410.00 4,019.00 4,263.00 4,123.00 4,308.00 4,162.00 4,165.00", "33,450.00", "4,181.25"],
  [14, "Ingresos Pasivos", "275.00 296.00 251.00 269.00 252.00 252.00 262.00 258.00", "2,115.00", "264.38"],
  [15, "Otros ingresos", "500.00 507.00 551.00 556.00 588.00 534.00 533.00 585.00", "4,354.00", "544.25", "end"],
  ["head", 16, "Gastos", "expense"],
  [18, "Alojamiento", "1,500.00 1,500.00 1,500.00 1,500.00 1,500.00 1,500.00 1,500.00 1,500.00", "12,000.00", "1,500.00"],
  [19, "Comestibles", "250.00 331.00 299.00 333.00 324.00 313.00 338.00 225.00", "2,413.00", "301.63"],
  [20, "Pago de coche 1", "345.00 345.00 345.00 345.00 345.00 345.00 345.00 345.00", "2,760.00", "345.00"],
  [21, "Pago de coche 2", "285.00 285.00 285.00 285.00 285.00 285.00 285.00 285.00", "2,280.00", "285.00"],
  [22, "Tarjeta de crédito 1", "45.00 45.00 45.00 45.00 45.00 45.00 45.00 45.00", "360.00", "45.00"],
  [23, "Tarjeta de crédito 2", "50.00 50.00 50.00 50.00 50.00 50.00 50.00 50.00", "400.00", "50.00"],
  [24, "Seguro", "120.00 120.00 120.00 120.00 120.00 120.00 120.00 120.00", "960.00", "120.00"],
  [25, "Teléfono particular", "50.00 50.00 50.00 50.00 50.00 50.00 50.00 50.00", "400.00", "50.00"],
  [26, "Teléfono móvil", "72.00 70.00 80.00 70.00 75.00 80.00 90.00 73.00", "610.00", "76.25"],
  [27, "Televisión por cable", "60.00 63.00 65.00 60.00 65.00 60.00 63.00 60.00", "496.00", "62.00"],
  [28, "Internet", "45.00 45.00 45.00 45.00 45.00 45.00 45.00 45.00", "360.00", "45.00"],
  [29, "Electricidad", "155.00 155.00 158.00 160.00 165.00 200.00 340.00 350.00", "1,683.00", "210.38"],
  [30, "Agua", "35.00 35.00 37.00 39.00 45.00 42.00 42.00 36.00", "311.00", "38.88"],
  [31, "Combustible", "50.00 45.00 40.00 40.00 42.00 50.00 55.00 40.00", "362.00", "45.25"],
  [32, "Entretenimiento", "123.00 92.00 58.00 131.00 46.00 105.00 84.00 108.00", "747.00", "93.38"],
  [33, "Matrícula", "550.00 550.00 550.00 550.00 550.00 550.00 550.00 550.00", "4,400.00", "550.00"],
  [34, "Ahorros", "200.00 225.00 300.00 200.00 200.00 200.00 250.00 325.00", "1,900.00", "237.50"],
  [35, "Otros", "20.00 30.00 20.00 30.00 30.00 20.00 30.00 20.00", "200.00", "25.00", "end"],
  [36, "", "", "", ""],
  [37, "", "", "", ""],
  ["", "", "", "", ""]
];

const side = '<td class="side"></td>';
const num = n => `<th class="rownum" scope="row"><div>${n}</div></th>`;
const cells = list => list.map(v => `<td>${v}</td>`).join("");

function headRows(n, title, kind) {
  return `<tr class="thin">${num(n)}${side}<th class="name title ${kind}" rowspan="2">${title}</th>` +
    `${cells(Array(14).fill(""))}${side}${side}</tr>` +
    `<tr class="head ${kind}">${num(n + 1)}${side}${cells([...months, "TOTAL ANUAL"])}` +
    `<td class="avg">PROMEDIO MENSUAL</td>${side}${side}</tr>`;
}

function dataRow(n, name, values, total, average, kind = "") {
  const list = values ? values.split(" ") : [];
  while (list.length < 12) list.push("");
  return `<tr class="${kind}">${num(n)}${side}<th class="name" scope="row">${name}</th>` +
    `${cells([...list, total])}<td class="avg">${average}</td>${side}${side}</tr>`;
}

const triangle = '<svg width="11" height="11" viewBox="0 0 11 11"><path d="M11 0v11H0z" fill="#fff"/></svg>';
document.getElementById("sheet").innerHTML =
  `<colgroup>${columns.map(([, w]) => (w ? `<col style="width:${w}px">` : "<col>")).join("")}</colgroup>` +
  `<thead><tr>${columns.map(([c], i) =>
    `<th class="${i ? (c === "P" ? "selected" : "") : "corner"}">${i ? c : triangle}</th>`).join("")}</tr></thead>` +
  `<tbody>${rows.map(r => (r[0] === "head" ? headRows(...r.slice(1)) : dataRow(...r))).join("")}</tbody>`;
```
